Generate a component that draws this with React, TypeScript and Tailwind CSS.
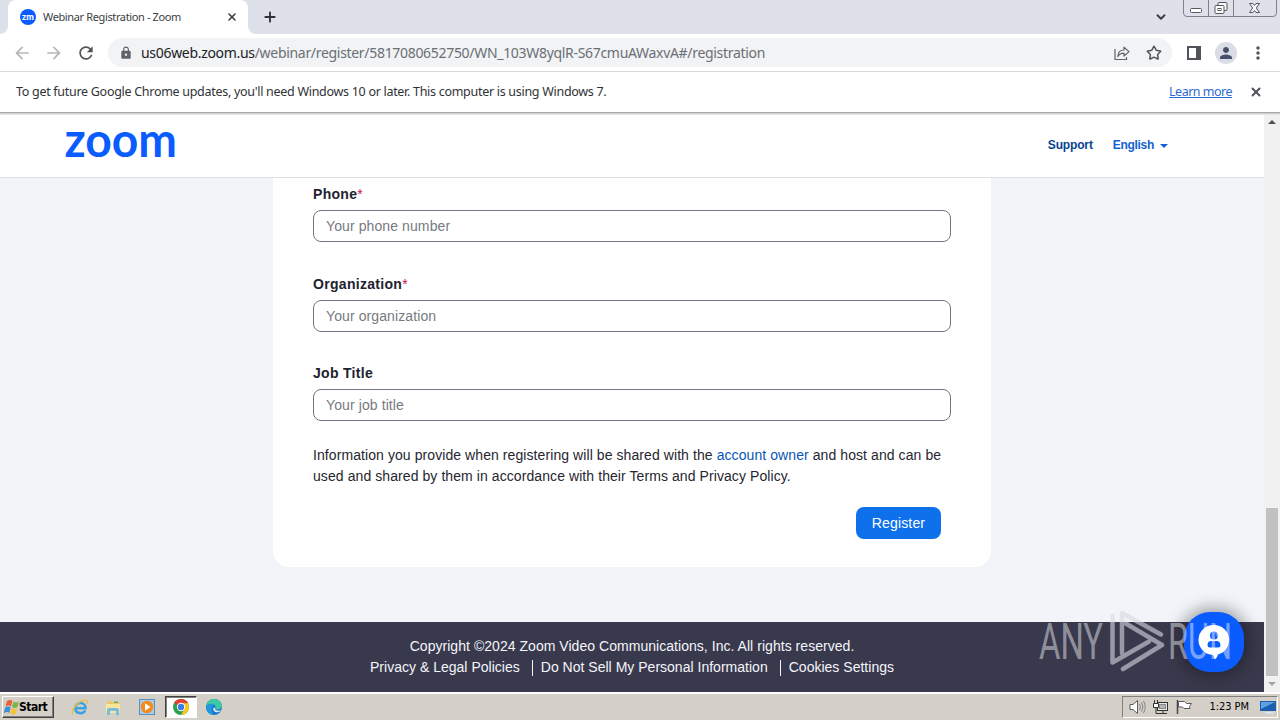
import type { ReactNode } from "react";
import { ChevronDown, Plus, Star, X } from "lucide-react";
import { MdArrowBack, MdArrowForward, MdLock, MdMoreVert, MdPerson, MdRefresh } from "react-icons/md";

const fields = [
  { label: "Phone", placeholder: "Your phone number", required: true },
  { label: "Organization", placeholder: "Your organization", required: true },
  { label: "Job Title", placeholder: "Your job title", required: false },
];

function ToolbarIcon({ children }: { children: ReactNode }) {
  return <span className="flex w-8 shrink-0 items-center justify-center">{children}</span>;
}

function TabStrip() {
  return (
    <div className="flex h-[34px] shrink-0 justify-between bg-[#dee1e9]">
      <div className="flex">
        <div className="flex w-2 bg-white">
          <div className="flex-1 rounded-br-lg bg-[#dee1e9]" />
        </div>
        <div className="flex w-60 items-center rounded-t-lg bg-white pr-2.5 pl-3">
          <span className="flex h-4 w-4 items-center justify-center rounded-full bg-[#0b5cff] pb-px font-[Lato,sans-serif] text-[9px] leading-none font-black text-white">
            zm
          </span>
          <span className="ml-[7px] flex-1 text-[11px] tracking-[-0.37px] text-[#3c4043]">Webinar Registration - Zoom</span>
          <X className="h-3 w-3 text-[#3c4043]" strokeWidth={3.2} />
        </div>
        <div className="flex w-2 bg-white">
          <div className="flex-1 rounded-bl-lg bg-[#dee1e9]" />
        </div>
        <Plus className="mt-[9px] ml-[6px] h-4 w-4 text-[#2f3338]" strokeWidth={2.8} />
      </div>
      <div className="flex">
        <ChevronDown className="mt-[10px] mr-[15px] h-3.5 w-3.5 text-[#3c4043]" strokeWidth={3.4} />
        <svg className="mr-[3px] h-[17px] w-[94px]" viewBox="0 0 94 17" fill="none" stroke="#7d8189">
          <path d="M.5 0V13Q.5 16.500 4 16.500H90Q93.500 16.500 93.500 13V0M25.500 0V16.500M50.500 0V16.500" />
          <g stroke="#53575e">
            <rect x="7.500" y="8.500" width="11" height="4" rx="1" fill="#fff" />
            <rect x="35" y="2.500" width="9" height="8" rx="1" fill="#f5f6f9" />
            <rect x="32" y="5.500" width="9" height="8" rx="1" fill="#fff" />
            <rect x="35" y="8.500" width="3" height="2" />
            <path d="M66.500 3.500h3.500l1.500 2 1.500-2h3.500l-3.200 4.500 3.200 4.500h-3.500l-1.500-2-1.500 2h-3.500l3.200-4.500z" fill="#f5f6f9" />
          </g>
        </svg>
      </div>
    </div>
  );
}

function Toolbar() {
  return (
    <div className="flex h-[38px] shrink-0 items-center gap-1.5 border-b border-[#d7dadd] bg-white px-1.5">
      <div className="flex">
        <ToolbarIcon>
          <MdArrowBack className="h-5 w-5 text-[#b5b7ba]" />
        </ToolbarIcon>
        <ToolbarIcon>
          <MdArrowForward className="h-5 w-5 text-[#b5b7ba]" />
        </ToolbarIcon>
        <ToolbarIcon>
          <MdRefresh className="h-5 w-5 text-[#505357]" />
        </ToolbarIcon>
      </div>
      <div className="flex h-[29px] flex-1 items-center rounded-full bg-[#f1f3f4] pr-0.5 pl-[11px]">
        <MdLock className="h-3.5 w-3.5 text-[#5f6368]" />
        <span className="ml-2 flex-1 text-sm tracking-[-0.31px] whitespace-nowrap text-[#6b6f74]">
          <span className="text-[#202124]">us06web.zoom.us</span>
          <span>/webinar/register/5817080652750/WN_103W8yqlR-S67cmuAWaxvA#/registration</span>
        </span>
        <ToolbarIcon>
          <svg className="h-4 w-4" viewBox="0 0 16 16" fill="none" stroke="#606368" strokeWidth="1.2">
            <path d="M1 4v10.500h11.500V12" />
            <path d="M3.800 11.500C4 7.500 6.200 5 10 5V2.200L15 6.600 10 11V8.200C7.200 8.200 5.200 9.300 3.800 11.500z" strokeLinejoin="round" />
          </svg>
        </ToolbarIcon>
        <ToolbarIcon>
          <Star className="h-4 w-4 text-[#505357]" strokeWidth={2.2} />
        </ToolbarIcon>
      </div>
      <div className="flex items-center">
        <ToolbarIcon>
          <span className="h-[14px] w-[14px] border-2 border-r-[5px] border-[#505357]" />
        </ToolbarIcon>
        <ToolbarIcon>
          <span className="flex h-[22px] w-[22px] items-center justify-center rounded-full bg-[#dadde6]">
            <MdPerson className="h-[18px] w-[18px] text-[#47516d]" />
          </span>
        </ToolbarIcon>
        <ToolbarIcon>
          <MdMoreVert className="h-5 w-5 text-[#505357]" />
        </ToolbarIcon>
      </div>
    </div>
  );
}

function InfoBar() {
  return (
    <div className="flex h-10 shrink-0 items-center bg-white pr-[17px] pl-4 text-[12.5px] text-[#303336]">
      <span className="flex-1 tracking-[-0.29px]">
        To get future Google Chrome updates, you'll need Windows 10 or later. This computer is using Windows 7.
      </span>
      <span className="tracking-[-0.5px] text-[#2b6ad0] underline">Learn more</span>
      <X className="ml-[17px] h-3.5 w-3.5 text-[#505357]" strokeWidth={3.2} />
    </div>
  );
}

function SiteHeader() {
  return (
    <header className="flex h-[63px] shrink-0 items-center justify-between border-b border-[#dcdfe4] bg-white pr-[96px] pb-0.5 pl-[65px]">
      <svg className="h-[34px] w-[114px] overflow-visible" viewBox="0 0 114 34">
        <text x="-0.500" y="28.500" textLength="112.500" lengthAdjust="spacingAndGlyphs" className="fill-[#0b5cff] font-[Lato,sans-serif] text-[47px] font-bold">
          zoom
        </text>
      </svg>
      <nav className="flex items-center text-xs font-bold">
        <span className="tracking-[-0.15px] text-[#07458f]">Support</span>
        <span className="ml-5 tracking-[-0.3px] text-[#1263d1]">English</span>
        <span className="mt-0.5 ml-1.5 border-x-4 border-t-4 border-x-transparent border-t-[#1263d1]" />
      </nav>
    </header>
  );
}

function RegistrationForm() {
  return (
    <div className="mx-auto h-[389px] w-[718px] rounded-b-[16px] bg-white px-10 pt-1.5">
      {fields.map((field) => (
        <div key={field.label} className="mb-[31.500px]">
          <label className="block h-[26px] text-sm leading-5 font-bold tracking-[0.3px] text-[#222230]">
            {field.label}
            {field.required && <span className="font-normal text-[#c1124c]">*</span>}
          </label>
          <input
            placeholder={field.placeholder}
            className="block h-8 w-[638px] rounded-lg border border-[#747487] px-3 text-sm tracking-[0.1px] placeholder:text-[#777a80]"
          />
        </div>
      ))}
      <p className="-mt-2 w-[640px] text-sm leading-[21px] tracking-[0.08px] whitespace-nowrap text-[#26262f]">
        Information you provide when registering will be shared with the <span className="text-[#0956b5]">account owner</span> and host and can be
        <br />
        used and shared by them in accordance with their Terms and Privacy Policy.
      </p>
      <div className="mt-5 flex justify-end pr-[10px]">
        <button className="h-8 w-[85px] rounded-lg bg-[#0e71eb] text-sm tracking-[0.15px] text-white">Register</button>
      </div>
    </div>
  );
}

function SiteFooter() {
  return (
    <footer className="h-[70px] shrink-0 bg-[#39394d] pt-[14px] text-center text-sm leading-[21px] tracking-[0.04px] text-[#f4f5fa]">
      <p>Copyright ©2024 Zoom Video Communications, Inc. All rights reserved.</p>
      <div className="flex items-center justify-center tracking-[0.015px] whitespace-nowrap">
        <span>Privacy &amp; Legal Policies</span>
        <span className="mr-2 ml-3 h-4 w-px bg-[#f4f5fa]" />
        <span>Do Not Sell My Personal Information</span>
        <span className="mr-2 ml-3 h-4 w-px bg-[#f4f5fa]" />
        <span>Cookies Settings</span>
      </div>
    </footer>
  );
}

function Scrollbar() {
  return (
    <div className="flex w-4 flex-col items-center bg-[#f1f1f1]">
      <span className="mt-[5px] border-x-4 border-b-4 border-x-transparent border-b-[#505050]" />
      <span className="mt-auto h-[168px] w-3 bg-[#c1c1c1]" />
      <span className="mt-[6px] mb-[6px] border-x-4 border-t-4 border-x-transparent border-t-[#a3a3a3]" />
    </div>
  );
}

function ChatButton() {
  return (
    <div className="absolute top-[612px] left-[1184px] flex h-[60px] w-[60px] items-center justify-center rounded-[26px] bg-[#0b5cff] shadow-[0_0_16px_4px_rgba(0,0,0,0.35)]">
      <svg className="h-9 w-8" viewBox="0 0 32 36">
        <path d="M16 1a15 15 0 0 1 4 29.500Q19.500 33 17 35.500L15 31A15 15 0 0 1 16 1z" fill="#fff" />
        <circle cx="16" cy="11.500" r="4" fill="#0b5cff" />
        <path d="M9.500 21q0-4 4-4h5q4 0 4 4 0 2.500-2.500 2.500h-8Q9.500 23.500 9.500 21z" fill="#0b5cff" />
      </svg>
    </div>
  );
}

function Watermark() {
  return (
    <svg className="absolute top-[604px] left-[1034px] h-[72px] w-[200px] overflow-visible" viewBox="0 0 200 72">
      <g className="fill-white/45 font-[Roboto,sans-serif] text-[50px] font-normal">
        <text x="5" y="55" textLength="64" lengthAdjust="spacingAndGlyphs">ANY</text>
        <text x="134" y="55" textLength="64" lengthAdjust="spacingAndGlyphs">RUN</text>
      </g>
      {/* one opacity for the group keeps the overlaps flat */}
      <g fill="none" stroke="#d8dae2" strokeWidth="4.500" strokeLinejoin="round" strokeLinecap="round" opacity="0.6">
        <path d="M78.500 12V58.500L115 37.500" />
        <path d="M88 49V9L127 30.500" />
        <path d="M89 65 128 41 91 19" />
      </g>
    </svg>
  );
}

function WindowsFlag() {
  return (
    <svg className="h-4 w-4" viewBox="0 0 16 16">
      <path d="M3 2q3-2 5.500 0L7 7.500Q4.500 5.500 1.500 7.500z" fill="#e8613b" />
      <path d="M9.500 2.500q3 2 5.500 0L13.500 8Q11 10 8 8z" fill="#7ab648" />
      <path d="M1.200 8.500q3-2 5.500 0L5.200 14Q3 12-.2 14z" fill="#3c8fd6" />
      <path d="M7.700 9q3 2 5.500 0l-1.500 5.500q-2.500 2-5.500 0z" fill="#f7c331" />
    </svg>
  );
}

function ExplorerIcon() {
  return (
    <svg className="h-[17px] w-[17px]" viewBox="0 0 17 17" fill="none">
      <path d="M4.300 9.300h10.200c0-7-9.800-7-10.200 0 0 6 8 6 9.900 2.200" stroke="#3ca2df" strokeWidth="2.600" />
      <path d="M2 15.500C-2 12 10-1 15.500 1.500c1.500.8.800 2.500 0 3.500" stroke="#e8bd3e" strokeWidth="1.300" />
    </svg>
  );
}

function FolderIcon() {
  return (
    <svg className="h-[17px] w-[17px]" viewBox="0 0 17 17">
      <path d="M2 2h5l1 1.500h7V13H2z" fill="#e9c86a" />
      <path d="M1 5h14v9H1z" fill="#f8e59c" />
      <path d="M2 16V11q0-2 2-2h8q2 0 2 2v5h-3v-4H5v4z" fill="#78bce0" />
      <path d="M9 2.500h4V4H9z" fill="#6cab57" />
    </svg>
  );
}

function MediaPlayerIcon() {
  return (
    <svg className="h-4 w-4" viewBox="0 0 16 16">
      <rect x=".5" y=".5" width="15" height="15" fill="#a9cbea" stroke="#5b91c2" />
      <circle cx="8" cy="8" r="6.200" fill="#f28a1c" />
      <path d="M6 4.300 11.500 8 6 11.700z" fill="#fff" />
    </svg>
  );
}

function ChromeIcon() {
  return (
    <svg className="h-4 w-4" viewBox="0 0 16 16">
      <circle cx="8" cy="8" r="8" fill="#2f9e4f" />
      <path d="M8 8 1.070 4A8 8 0 0 1 14.930 4z" fill="#e24033" />
      <path d="M8 4.200h7A8 8 0 0 1 8 16l3.300-6z" fill="#fbc91d" />
      <circle cx="8" cy="8" r="4.200" fill="#fff" />
      <circle cx="8" cy="8" r="3.200" fill="#3b7de8" />
    </svg>
  );
}

function EdgeIcon() {
  return (
    <svg className="h-4 w-4" viewBox="0 0 16 16">
      <circle cx="8" cy="8" r="8" fill="#1776cf" />
      <path d="M0 7.500C1 2 4 0 8 0c5 0 8 3.500 8 6.500C16 9 14 10.500 11.500 10.500c-2 0-2.500-1-2-2C10.500 5 3.500 3.500 0 7.500z" fill="#3ec9a5" />
      <path d="M0 7.500C2 4 7 4 8.800 6.500 5 6.500 4.500 12 8 15.900 3 16 0 12.500 0 7.500z" fill="#2397dc" />
      <path d="M9.200 8.500c-1 2.500 2.500 4 5.800 2.700l-1 1.300C10 14.500 6.500 12 7.300 9z" fill="#d4e9ed" />
    </svg>
  );
}

function Tray() {
  return (
    <div className="flex h-[22px] w-[156px] items-center border border-t-[#808080] border-r-white border-b-white border-l-[#808080] pl-[6px] text-[11px] text-black">
      <svg className="h-4 w-[66px]" viewBox="0 0 66 16" fill="none" stroke="#5c5c5c">
        <path d="M1 5.500h3L8.500 1.500v13L4 10.500H1z" fill="#fff" />
        <path d="M10.500 5q2 3 0 6M12.500 3.500q3 4.500 0 9M14.500 2q3.500 6 0 12" stroke="#858585" />
        <rect x="28.500" y="3.500" width="10" height="8" fill="#e7e7e7" stroke="#333" />
        <rect x="30.500" y="5.500" width="6" height="4" fill="#b5b5b5" stroke="#888" />
        <path d="M30 14.500h8M34 12v2" stroke="#333" />
        <path d="M24.500 4.500h5v4h-5z" fill="#fff" stroke="#333" />
        <path d="M25.500 1v3M28.500 1v3M27 9v5.500h3" stroke="#333" />
        <path d="M48.500 1v14" stroke="#444" strokeWidth="1.500" />
        <path d="M49.500 2.500h6l2 2h5l-2 3 .5 2h-6l-1.500-1.500h-4z" fill="#fff" />
      </svg>
      <span className="ml-auto mr-[11px] pt-px tracking-[-0.05px] whitespace-nowrap">1:23 PM</span>
      <svg className="mr-px h-[14px] w-4" viewBox="0 0 16 14">
        <path d="M0 1h16v10H0z" fill="#1b5fae" />
        <path d="M1 2h14L1 9z" fill="#5f9fe2" />
        <path d="M5 12h8v1.500H5z" fill="#d8e9f8" />
      </svg>
    </div>
  );
}

function Taskbar() {
  return (
    <div className="flex h-7 shrink-0 items-center border-t-2 border-white bg-[#d4d0c8] px-[2px]">
      <button className="flex h-[22px] w-[52px] items-center border border-t-white border-r-[#404040] border-b-[#404040] border-l-white pl-px font-['DejaVu_Sans_Condensed','DejaVu_Sans',sans-serif] text-[12px] font-bold text-black shadow-[inset_-1px_-1px_#808080]">
        <WindowsFlag />
        <span className="-ml-px tracking-[-0.5px]">Start</span>
      </button>
      <div className="ml-2 flex items-center">
        <span className="flex w-[34px] justify-center"><ExplorerIcon /></span>
        <span className="flex w-[34px] justify-center"><FolderIcon /></span>
        <span className="flex w-[34px] justify-center"><MediaPlayerIcon /></span>
        <span className="ml-px flex h-[22px] w-8 items-center justify-center border border-t-[#404040] border-r-white border-b-white border-l-[#404040] bg-white shadow-[inset_1px_1px_#808080]">
          <ChromeIcon />
        </span>
        <span className="flex w-[34px] justify-center"><EdgeIcon /></span>
      </div>
      <div className="ml-auto font-['DejaVu_Sans_Condensed','DejaVu_Sans',sans-serif]">
        <Tray />
      </div>
    </div>
  );
}

export default function App() {
  return (
    <div className="relative flex h-[720px] w-[1280px] flex-col overflow-hidden bg-white font-['Noto_Sans',sans-serif]">
      <TabStrip />
      <Toolbar />
      <InfoBar />
      <div className="h-[3px] shrink-0 border-y border-t-[#a8a8a8] border-b-[#e6e6e6] bg-[#d0d0d0]" />
      <div className="flex h-[577px] shrink-0">
        <div className="flex flex-1 flex-col bg-[#f1f4f8] font-['Liberation_Sans',Arial,sans-serif]">
          <SiteHeader />
          <div className="flex-1">
            <RegistrationForm />
          </div>
          <SiteFooter />
        </div>
        <Scrollbar />
      </div>
      <Taskbar />
      <ChatButton />
      <Watermark />
    </div>
  );
}
